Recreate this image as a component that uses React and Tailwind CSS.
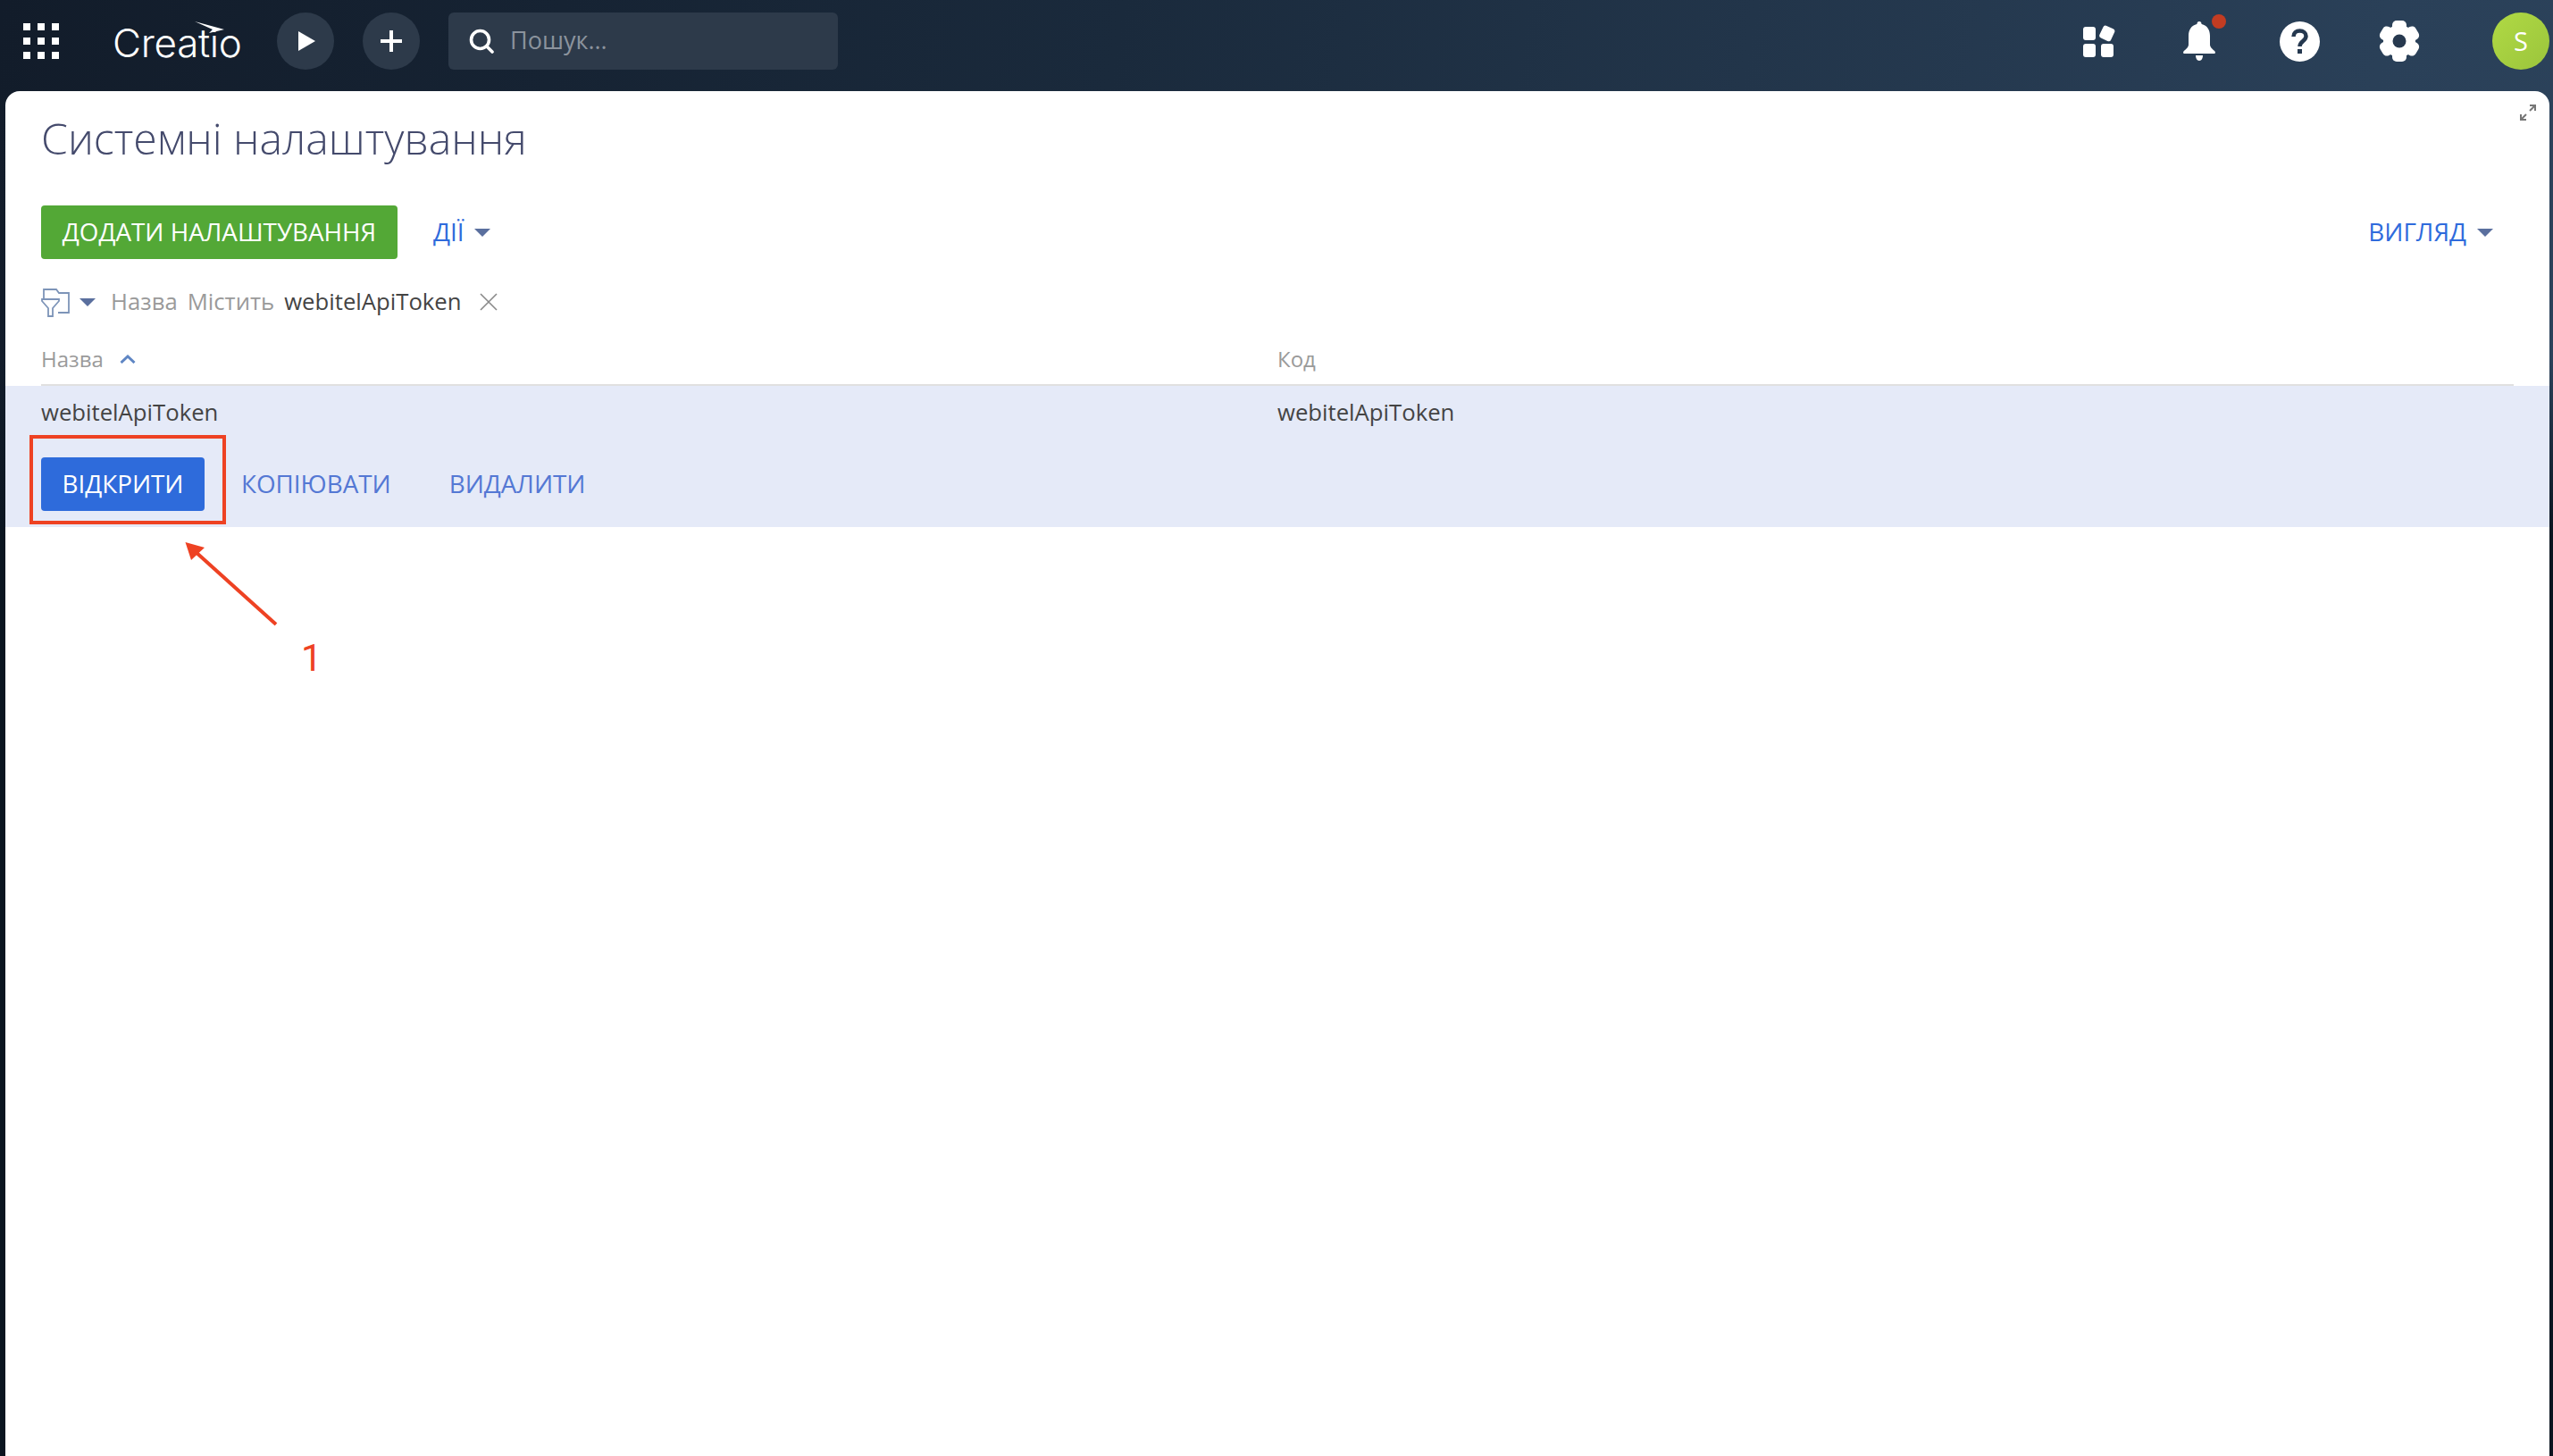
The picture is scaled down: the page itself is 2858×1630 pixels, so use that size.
import React from "react";

const font = { fontFamily: '"Open Sans", "Noto Sans", sans-serif' };

const Caret = ({ className = "" }) => (
  <svg className={`w-[18px] h-[9px] ${className}`} viewBox="0 0 18 9">
    <path d="M0 0h18L9 9z" fill="#5a6f9e" />
  </svg>
);

const AppGrid = () => (
  <div className="grid grid-cols-3 gap-[8px] w-[40px] ml-[26px] mt-[12px]">
    {Array.from({ length: 9 }).map((_, i) => (
      <div key={i} className="w-[8px] h-[8px] bg-white" />
    ))}
  </div>
);

const Logo = () => (
  <div className="relative w-[144px] h-[64px] ml-[60px]">
    <svg className="absolute left-[92px] top-[10px] w-[34px] h-[14px]" viewBox="0 0 34 14">
      <path d="M0 0l33 9-17 4 4-4z" fill="#fff" />
    </svg>
    <span className="absolute left-0 top-[6px] text-[44px] leading-[56px] font-light tracking-[-0.3px] text-white" style={{ fontFamily: "Inter, sans-serif" }}>
      Creatio
    </span>
  </div>
);

const RoundButton = ({ children }) => (
  <button className="w-[64px] h-[64px] rounded-full bg-[#2d3a4a] flex items-center justify-center">
    {children}
  </button>
);

const TopBar = () => (
  <header className="h-[102px] flex items-start pt-[14px] pr-[4px]">
    <AppGrid />
    <Logo />
    <div className="ml-[40px] flex gap-[32px]">
      <RoundButton>
        <svg className="w-[20px] h-[22px] ml-[3px]" viewBox="0 0 20 22"><path d="M0 0l19 11L0 22z" fill="#fff" /></svg>
      </RoundButton>
      <RoundButton>
        <svg className="w-[24px] h-[24px]" viewBox="0 0 24 24"><path d="M12 0v24M0 12h24" stroke="#fff" strokeWidth="4" /></svg>
      </RoundButton>
    </div>
    <div className="ml-[32px] w-[436px] h-[64px] rounded-[6px] bg-[#2d3a4a] flex items-center pl-[23px]">
      <svg className="w-[28px] h-[28px]" viewBox="0 0 28 28" fill="none" stroke="#fff" strokeWidth="3.6">
        <circle cx="12.5" cy="12.5" r="10" />
        <path d="M20 20l6 6" strokeLinecap="round" />
      </svg>
      <span className="ml-[18px] -mt-[2px] text-[27px] text-[#8b939d]" style={font}>Пошук...</span>
    </div>
    <div className="ml-auto flex items-center">
      <div className="w-[112px] h-[64px] flex items-center justify-center">
        <svg className="w-[36px] h-[36px]" viewBox="0 0 36 36" fill="#fff">
          <rect x="0" y="2" width="14" height="15" rx="3" />
          <rect x="20" y="2" width="14" height="15" rx="3" transform="rotate(25 27 9)" />
          <rect x="0" y="21" width="14" height="15" rx="3" />
          <rect x="20" y="21" width="14" height="15" rx="3" />
        </svg>
      </div>
      <div className="relative w-[112px] h-[64px] flex items-center justify-center">
        <svg className="w-[36px] h-[44px]" viewBox="0 0 36 44" fill="#fff">
          <path d="M18 0c1.600 0 2.500 1 2.600 3C27 4.500 30 9.500 30 16v10c0 3 3 5 5.500 7.500.8 1 .4 2.500-1 2.500H1.500C.1 36-.3 34.500.5 33.500 3 31 6 29 6 26V16C6 9.500 9 4.500 15.400 3 15.500 1 16.400 0 18 0z" />
          <path d="M14 38h8c0 3-1.500 6-4 6s-4-3-4-6z" />
        </svg>
        <div className="absolute left-[70px] top-[2px] w-[16px] h-[16px] rounded-full bg-[#c23c22]" />
      </div>
      <div className="w-[112px] h-[64px] flex items-center justify-center">
        <svg className="w-[45px] h-[45px]" viewBox="0 0 45 45">
          <circle cx="22.500" cy="22.500" r="22.500" fill="#fff" />
          <path d="M15.500 17c0-4 3-6.500 7-6.500s7 2.500 7 6c0 5.500-7 5.500-7 11.500" fill="none" stroke="#25384f" strokeWidth="4.500" />
          <rect x="20" y="31" width="5" height="5" fill="#25384f" />
        </svg>
      </div>
      <div className="w-[112px] h-[64px] flex items-center justify-center">
        <svg className="w-[46px] h-[46px]" viewBox="-23 -23 46 46">
          <circle r="18" fill="#fff" />
          {[0, 60, 120, 180, 240, 300].map((a) => (
            <rect key={a} x="-8" y="-23" width="16" height="14" rx="5" fill="#fff" transform={`rotate(${a})`} />
          ))}
          <circle r="7.500" fill="#27394f" />
        </svg>
      </div>
      <div className="ml-[48px] w-[64px] h-[64px] rounded-full bg-[linear-gradient(135deg,#b0d944,#9bc53c)] flex items-center justify-center text-[29px] text-white" style={font}>
        S
      </div>
    </div>
  </header>
);

const FilterIcon = () => (
  <svg className="w-[33px] h-[33px]" viewBox="0 0 33 33" fill="none" stroke="#7d94b8" strokeWidth="1.800">
    <path d="M3 12V2h14l3 4h11v22H19" />
    <path d="M1 13h19v2l-7 8v9H8v-9l-7-8z" />
  </svg>
);

const SystemSettings = () => (
  <div className="relative flex-1 ml-[6px] mr-[4px] bg-white rounded-t-[16px] px-[40px]">
    <svg className="absolute right-[15px] top-[15px] w-[18px] h-[18px]" viewBox="0 0 18 18" fill="none" stroke="#777" strokeWidth="2">
      <path d="M11 7l6-6M11 1h6v6M7 11l-6 6M1 11v6h6" />
    </svg>

    <div className="h-[128px] pb-[24px] flex items-center">
      <h1 className="text-[48.2px] font-light text-[#444a6c]" style={font}>Системні налаштування</h1>
    </div>

    <div className="h-[60px] flex items-center">
      <button className="h-[60px] w-[399px] rounded-[4px] bg-[#53a836] text-[27.8px] text-white whitespace-nowrap" style={font}>
        ДОДАТИ НАЛАШТУВАННЯ
      </button>
      <button className="ml-[40px] flex items-center text-[27.8px] text-[#2f6bdc]" style={font}>
        ДІЇ
        <Caret className="ml-[11px]" />
      </button>
      <button className="ml-auto mr-[23px] flex items-center text-[27.8px] text-[#2f6bdc]" style={font}>
        ВИГЛЯД
        <Caret className="ml-[12px]" />
      </button>
    </div>

    <div className="mt-[32px] h-[32px] flex items-center text-[25.7px]" style={font}>
      <FilterIcon />
      <Caret className="ml-[10px]" />
      <span className="ml-[17px] text-[#9a9a9a]">Назва</span>
      <span className="ml-[11px] text-[#9a9a9a]">Містить</span>
      <span className="ml-[11px] text-[#444]">webitelApiToken</span>
      <svg className="ml-[20px] w-[20px] h-[20px]" viewBox="0 0 20 20" stroke="#888" strokeWidth="1.600"><path d="M1 1l18 18M19 1L1 19" /></svg>
    </div>

    <div className="h-[78px] grid grid-cols-[1384px_1fr] items-end pb-[10px] border-b-2 border-[#e0e0e0] text-[24px] text-[#9a9a9a]" style={font}>
      <div className="flex items-center">
        Назва
        <svg className="ml-[18px] w-[18px] h-[10px]" viewBox="0 0 18 10" fill="none" stroke="#5f86c4" strokeWidth="3"><path d="M1.500 9L9 2l7.500 7" /></svg>
      </div>
      <div>Код</div>
    </div>

    <div className="-mx-[40px] px-[40px] h-[158px] bg-[#e5eaf8] pt-[12px]" style={font}>
      <div className="grid grid-cols-[1384px_1fr] text-[25.7px] leading-[36px] text-[#444]">
        <div>webitelApiToken</div>
        <div>webitelApiToken</div>
      </div>
      <div className="mt-[32px] flex items-center text-[27.8px]">
        <button className="w-[183px] h-[60px] rounded-[4px] bg-[#2e6bdb] text-white">ВІДКРИТИ</button>
        <button className="ml-[41px] text-[#5478d4]">КОПІЮВАТИ</button>
        <button className="ml-[65px] text-[#5478d4]">ВИДАЛИТИ</button>
      </div>
    </div>
  </div>
);

export default function App() {
  return (
    <div className="relative h-[1630px] w-full overflow-hidden flex flex-col bg-[radial-gradient(ellipse_120px_260px_at_0px_1225px,#3b2b28,transparent),linear-gradient(100deg,#121c2a_0%,#1a2a3c_40%,#2a4058_85%,#2c435c_100%)]">
      <div className="absolute inset-x-0 top-[400px] bottom-0 bg-[linear-gradient(#0000,#0b1520_200px)]" />
      <div className="relative flex-1 flex flex-col">
        <TopBar />
        <SystemSettings />
      </div>

      {/* annotation on top of the screenshot */}
      <div className="absolute left-[33px] top-[487px] w-[220px] h-[100px] border-[4px] border-[#ee4223]" />
      <svg className="absolute left-[200px] top-[600px] w-[120px] h-[105px]" viewBox="0 0 120 105">
        <path d="M109 99L18 17" stroke="#ee4223" strokeWidth="4" />
        <path d="M7.500 7l21.500 6-15 14z" fill="#ee4223" />
      </svg>
      <span className="absolute left-[337px] top-[716px] text-[42px] leading-[42px] text-[#ee4223]" style={{ fontFamily: "Roboto, sans-serif" }}>
        1
      </span>
    </div>
  );
}
